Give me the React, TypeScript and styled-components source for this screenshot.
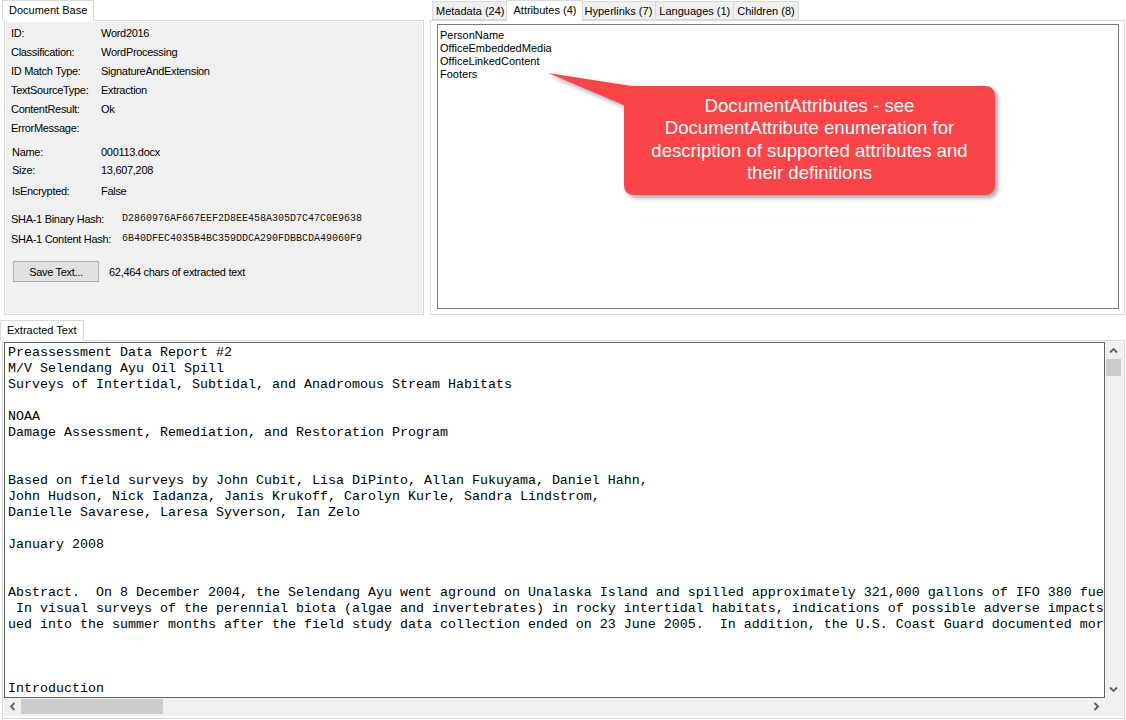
import React from "react";
import styled, { createGlobalStyle } from "styled-components";

const GlobalStyle = createGlobalStyle`
  html, body {
    margin: 0;
    padding: 0;
    background: #ffffff;
  }
  body {
    font-family: "Liberation Sans", Arial, sans-serif;
    font-size: 11px;
    color: #000;
  }
`;

const Window = styled.div`
  position: relative;
  width: 1126px;
  height: 720px;
  overflow: hidden;
  display: grid;
  grid-template-rows: 320px 400px;
  background: #fff;
`;

const TopRow = styled.div`
  display: flex;
  gap: 6px;
  padding-left: 4px;
`;

const TabControl = styled.div<{ $width: number }>`
  width: ${(p) => p.$width}px;
  display: flex;
  flex-direction: column;
`;

const TabStrip = styled.div<{ $pad: number }>`
  height: 20px;
  display: flex;
  align-items: flex-end;
  padding-left: ${(p) => p.$pad}px;
  position: relative;
  z-index: 1;
`;

const Tab = styled.div<{ $active?: boolean }>`
  box-sizing: border-box;
  height: ${(p) => (p.$active ? 21 : 19)}px;
  margin: ${(p) => (p.$active ? "0 -2px -1px" : "0 0 0 -1px")};
  padding: 0 ${(p) => (p.$active ? 6 : 3)}px;
  line-height: ${(p) => (p.$active ? 19 : 18)}px;
  border: 1px solid #d9d9d9;
  border-bottom: ${(p) => (p.$active ? "none" : "1px solid #d9d9d9")};
  background: ${(p) => (p.$active ? "#ffffff" : "#f0f0f0")};
  white-space: nowrap;
  position: relative;
  z-index: ${(p) => (p.$active ? 2 : 1)};
  &:first-child {
    margin-left: ${(p) => (p.$active ? "-2px" : "0")};
  }
`;

const TabPage = styled.div<{ $bg?: string }>`
  box-sizing: border-box;
  height: 295px;
  border: 1px solid #d9d9d9;
  background: ${(p) => p.$bg ?? "#ffffff"};
`;

const InfoPanel = styled.div`
  box-sizing: border-box;
  height: 100%;
  border: 1px solid #ffffff;
  padding: 1px 0 0 5px;
  display: flex;
  flex-direction: column;
  letter-spacing: -0.3px;
`;

const InfoRow = styled.div<{ $mt?: number; $h?: number; $indent?: number }>`
  display: flex;
  align-items: center;
  height: ${(p) => p.$h ?? 19}px;
  margin-top: ${(p) => p.$mt ?? 0}px;
  padding-left: ${(p) => p.$indent ?? 0}px;
  color: #000;
`;

const Label = styled.span<{ $w: number }>`
  width: ${(p) => p.$w}px;
  flex: none;
`;

const Hash = styled.span`
  font-family: "Liberation Mono", "DejaVu Sans Mono", monospace;
  font-size: 10px;
  letter-spacing: 0;
  color: #111;
`;

const Button = styled.div`
  box-sizing: border-box;
  width: 86px;
  height: 21px;
  margin-left: 2px;
  border: 1px solid #adadad;
  background: #e1e1e1;
  display: flex;
  align-items: center;
  justify-content: center;
  margin-right: 10px;
`;

const ListBox = styled.div`
  box-sizing: border-box;
  margin: 3px 5px 0 6px;
  height: 285px;
  border: 1px solid #7a7a7a;
  padding: 4px 2px;
  background: #fff;
`;

const ListItem = styled.div`
  height: 13px;
  line-height: 13px;
`;

const Bottom = styled.div`
  display: flex;
  flex-direction: column;
  padding-left: 2px;
  padding-right: 2px;
`;

const BottomPage = styled.div`
  box-sizing: border-box;
  height: 379px;
  border: 1px solid #d9d9d9;
  padding: 1px 0 0 1px;
  background: #fff;
`;

const TextFrame = styled.div`
  box-sizing: border-box;
  width: 1120px;
  height: 374px;
  display: grid;
  grid-template-columns: 1101px 17px;
  grid-template-rows: 356px 17px;
  background: #f0f0f0;
`;

const TextArea = styled.pre`
  box-sizing: border-box;
  margin: 0;
  border: 1px solid #646464;
  background: #fff;
  padding: 2px 3px 0;
  font-family: "Liberation Mono", "Courier New", monospace;
  font-size: 13.33px;
  line-height: 16px;
  color: #000;
  white-space: pre;
  overflow: hidden;
`;

const VScroll = styled.div`
  background: #f0f0f0;
  display: flex;
  flex-direction: column;
  align-items: center;
`;

const HScroll = styled.div`
  background: #f0f0f0;
  display: flex;
  align-items: center;
`;

const ArrowBox = styled.div`
  width: 17px;
  height: 17px;
  display: flex;
  align-items: center;
  justify-content: center;
  flex: none;
`;

const VThumb = styled.div`
  width: 15px;
  height: 17px;
  background: #cdcdcd;
`;

const HThumb = styled.div`
  width: 142px;
  height: 15px;
  background: #cdcdcd;
`;

const Track = styled.div`
  flex: 1;
  display: flex;
  align-items: center;
`;

const Corner = styled.div`
  background: #f0f0f0;
`;

const CalloutTail = styled.svg`
  position: absolute;
  left: 540px;
  top: 66px;
  filter: drop-shadow(2px 3px 2px rgba(0, 0, 0, 0.3));
`;

const CalloutBox = styled.div`
  position: absolute;
  left: 624px;
  top: 86px;
  width: 371px;
  height: 109px;
  box-sizing: border-box;
  border-radius: 9px;
  background: #fb4447;
  box-shadow: 3px 3px 4px rgba(0, 0, 0, 0.35);
  color: #fff;
  font-family: "Liberation Sans", Arial, sans-serif;
  font-size: 18.6px;
  line-height: 22.3px;
  text-align: center;
  padding: 9px 4px 0;
  white-space: nowrap;
`;

const Chevron = ({ dir }: { dir: "up" | "down" | "left" | "right" }) => {
  const rot = { up: 0, right: 90, down: 180, left: 270 }[dir];
  return (
    <svg width="9" height="9" viewBox="0 0 9 9" style={{ transform: `rotate(${rot}deg)` }}>
      <path d="M1 6.5 L4.5 3 L8 6.5" fill="none" stroke="#606060" strokeWidth="1.8" />
    </svg>
  );
};

const extracted = [
  "Preassessment Data Report #2",
  "M/V Selendang Ayu Oil Spill",
  "Surveys of Intertidal, Subtidal, and Anadromous Stream Habitats",
  "",
  "NOAA",
  "Damage Assessment, Remediation, and Restoration Program",
  "",
  "",
  "Based on field surveys by John Cubit, Lisa DiPinto, Allan Fukuyama, Daniel Hahn,",
  "John Hudson, Nick Iadanza, Janis Krukoff, Carolyn Kurle, Sandra Lindstrom,",
  "Danielle Savarese, Laresa Syverson, Ian Zelo",
  "",
  "January 2008",
  "",
  "",
  "Abstract.  On 8 December 2004, the Selendang Ayu went aground on Unalaska Island and spilled approximately 321,000 gallons of IFO 380 fue",
  " In visual surveys of the perennial biota (algae and invertebrates) in rocky intertidal habitats, indications of possible adverse impacts",
  "ued into the summer months after the field study data collection ended on 23 June 2005.  In addition, the U.S. Coast Guard documented mor",
  "",
  "",
  "",
  "Introduction",
].join("\n");

export default function App() {
  return (
    <Window>
      <GlobalStyle />
      <TopRow>
        <TabControl $width={420}>
          <TabStrip $pad={0}>
            <Tab $active>Document Base</Tab>
          </TabStrip>
          <TabPage $bg="#f0f0f0">
            <InfoPanel>
              <InfoRow><Label $w={90}>ID:</Label>Word2016</InfoRow>
              <InfoRow><Label $w={90}>Classification:</Label>WordProcessing</InfoRow>
              <InfoRow><Label $w={90}>ID Match Type:</Label>SignatureAndExtension</InfoRow>
              <InfoRow><Label $w={90}>TextSourceType:</Label>Extraction</InfoRow>
              <InfoRow><Label $w={90}>ContentResult:</Label>Ok</InfoRow>
              <InfoRow><Label $w={90}>ErrorMessage:</Label></InfoRow>
              <InfoRow $mt={5} $indent={1}><Label $w={89}>Name:</Label>000113.docx</InfoRow>
              <InfoRow $h={18} $indent={1}><Label $w={89}>Size:</Label>13,607,208</InfoRow>
              <InfoRow $mt={2} $indent={1}><Label $w={89}>IsEncrypted:</Label>False</InfoRow>
              <InfoRow $mt={9}><Label $w={111}>SHA-1 Binary Hash:</Label><Hash>D2860976AF667EEF2D8EE458A305D7C47C0E9638</Hash></InfoRow>
              <InfoRow $mt={1}><Label $w={111}>SHA-1 Content Hash:</Label><Hash>6B40DFEC4035B4BC359DDCA290FDBBCDA49060F9</Hash></InfoRow>
              <InfoRow $mt={13} $h={21}>
                <Button>Save Text...</Button>
                62,464 chars of extracted text
              </InfoRow>
            </InfoPanel>
          </TabPage>
        </TabControl>
        <TabControl $width={695}>
          <TabStrip $pad={2}>
            <Tab>Metadata (24)</Tab>
            <Tab $active>Attributes (4)</Tab>
            <Tab>Hyperlinks (7)</Tab>
            <Tab>Languages (1)</Tab>
            <Tab>Children (8)</Tab>
          </TabStrip>
          <TabPage>
            <ListBox>
              <ListItem>PersonName</ListItem>
              <ListItem>OfficeEmbeddedMedia</ListItem>
              <ListItem>OfficeLinkedContent</ListItem>
              <ListItem>Footers</ListItem>
            </ListBox>
          </TabPage>
        </TabControl>
      </TopRow>
      <Bottom>
        <TabStrip $pad={0}>
          <Tab $active>Extracted Text</Tab>
        </TabStrip>
        <BottomPage>
          <TextFrame>
            <TextArea>{extracted}</TextArea>
            <VScroll>
              <ArrowBox><Chevron dir="up" /></ArrowBox>
              <VThumb />
              <Track />
              <ArrowBox><Chevron dir="down" /></ArrowBox>
            </VScroll>
            <HScroll>
              <ArrowBox><Chevron dir="left" /></ArrowBox>
              <Track><HThumb /></Track>
              <ArrowBox><Chevron dir="right" /></ArrowBox>
            </HScroll>
            <Corner />
          </TextFrame>
        </BottomPage>
      </Bottom>
      <CalloutTail width="110" height="50" viewBox="0 0 110 50">
        <polygon points="8,7 98,21 86,40" fill="#fb4447" />
      </CalloutTail>
      <CalloutBox>
        DocumentAttributes - see
        <br />
        DocumentAttribute enumeration for
        <br />
        description of supported attributes and
        <br />
        their definitions
      </CalloutBox>
    </Window>
  );
}
